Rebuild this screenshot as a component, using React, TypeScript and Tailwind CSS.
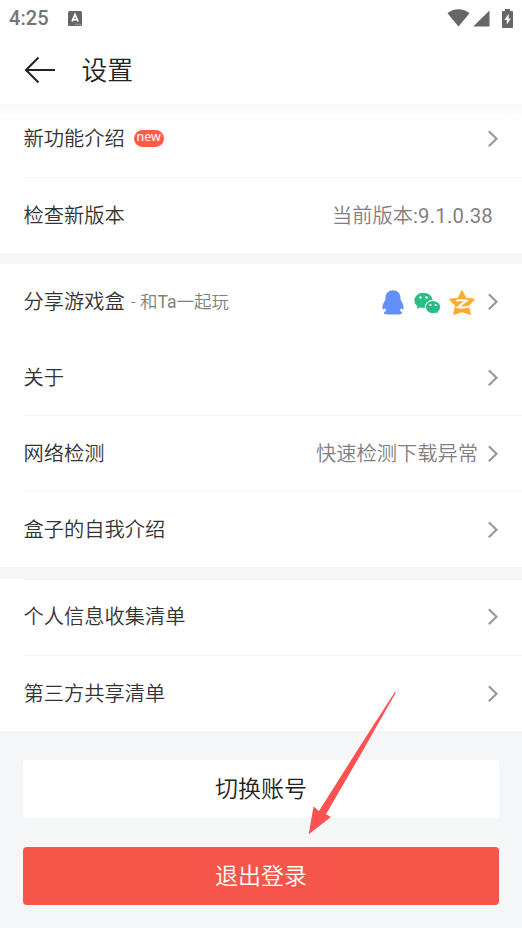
import type { ReactNode } from "react";

function StatusBar() {
  return (
    <div className="flex h-9 items-center justify-between pr-[9px] pl-[9px] text-[#666]">
      <div className="flex items-center">
        <span className="w-[59px] text-[20px] leading-9 font-medium tracking-[0.1px] text-[#757575]">4:25</span>
        <svg width="14" height="15" viewBox="0 0 14 15">
          <rect width="14" height="15" rx="1.5" fill="#666" />
          <path d="M4 10.5 7 3.5l3 7M5 8.6h4" fill="none" stroke="#fff" strokeWidth="1.7" />
          <path d="M7 13.3h6" stroke="#bbb" strokeWidth="1" strokeDasharray="1.2 .5" />
        </svg>
      </div>
      <div className="flex items-center">
        <svg width="23" height="18" viewBox="0 0 23 18" fill="currentColor">
          <path d="M.5 4.3C6.5-1 16.5-1 22.5 4.3L11.5 17.5z" />
        </svg>
        <svg className="ml-[3px]" width="17" height="17" viewBox="0 0 17 17" fill="currentColor">
          <path d="M16.5.5v16H.2z" />
        </svg>
        <svg className="ml-3" width="11" height="19" viewBox="0 0 11 19">
          <path d="M3 0h5v2h2.2q.8 0 .8.8v15.4q0 .8-.8.8H.8q-.8 0-.8-.8V2.8Q0 2 .8 2H3z" fill="currentColor" />
          <path d="M6.8 4.8 2.3 11h2.5v4.8l4-6.2H6.500z" fill="#fff" />
        </svg>
      </div>
    </div>
  );
}

function Chevron() {
  return (
    <svg className="ml-[9px]" width="12" height="18" viewBox="0 0 12 18" fill="none" stroke="#999" strokeWidth="2.2">
      <path d="m1.8 1.3 7.700 7.500-7.700 7.500" />
    </svg>
  );
}

function ShareIcons() {
  return (
    <div className="mr-0.5 flex items-center pt-0.5">
      <svg width="22" height="25" viewBox="0 0 22 25" fill="#6290fa">
        <path d="M11 .2C6.500.2 3.500 3.500 3.500 7.800v2C2 12 .5 14.500.4 17.300c0 2.200.9 2.900 2.500 1 .3.900.8 1.700 1.400 2.400-1.600.7-2.300 1.400-2.300 2.300 0 1.100 1 1.400 3.300 1.400h11.400c2.300 0 3.300-.3 3.300-1.400 0-.9-.7-1.600-2.300-2.300.6-.7 1.100-1.500 1.400-2.400 1.600 1.900 2.500 1.200 2.500-1-.1-2.800-1.600-5.300-3.100-7.500v-2C18.500 3.500 15.500.2 11 .2Z" />
      </svg>
      <svg className="mt-0.5 ml-2.5" width="28" height="24" viewBox="0 0 28 24">
        <path d="M9.500.8C4.500.8.4 4.200.4 8.500c0 2.300 1.200 4.300 3.200 5.800l-.8 2.800 3.200-1.600c1.100.3 2.200.5 3.500.5 5 0 9.100-3.400 9.100-7.500S14.500.8 9.500.8Z" fill="#29bf84" />
        <path d="M19 8.400c-4.300 0-7.800 3-7.800 6.700s3.500 6.700 7.800 6.700c1 0 2-.2 2.900-.5l2.800 1.500-.7-2.500c1.700-1.200 2.800-3.100 2.800-5.200 0-3.700-3.500-6.700-7.800-6.700Z" fill="#29bf84" stroke="#fff" strokeWidth="1.2" />
        <g fill="#fff">
          <circle cx="6.5" cy="5.500" r="1.300" />
          <circle cx="12.5" cy="5.500" r="1.300" />
          <circle cx="16.4" cy="13" r="1.100" />
          <circle cx="21.7" cy="13" r="1.100" />
        </g>
      </svg>
      <svg className="ml-1.5" width="28" height="27" viewBox="0 0 28 27">
        <path d="m14 1.500 3.900 7.700 8.600 1.100-6 6.600 1.900 8.600-8.400-2.800-8.400 2.800 1.900-8.600-6-6.600 8.600-1.100z" fill="#ffab2e" stroke="#ffab2e" strokeLinejoin="round" />
        <path d="M8.300 11.500q5.500-.6 10.200 0L10 18.200q5.500.9 11-.8" fill="none" stroke="#fff" strokeWidth="2.100" />
      </svg>
    </div>
  );
}

interface RowProps {
  label: string;
  extra?: ReactNode;
  children?: ReactNode;
  divider?: boolean;
  last?: boolean;
  arrow?: boolean;
}

function Row({ label, extra, children, divider, last, arrow = true }: RowProps) {
  return (
    <div className={last ? "h-[75px] pl-[23.5px]" : "h-[76px] pl-[23.5px]"}>
      <div className={arrow ? "flex h-[75px] items-center pr-[23px]" : "flex h-[75px] items-center pr-[29px]"}>
        <span className="pt-0.5 text-[20.25px] text-[#333]">{label}</span>
        {extra}
        <div className="ml-auto flex items-center text-[20.25px] text-[#808080]">
          {children}
          {arrow && <Chevron />}
        </div>
      </div>
      {divider && <div className="h-px bg-[#f3f3f3]" />}
    </div>
  );
}

export default function App() {
  return (
    <div className="relative h-[928px] w-[522px] overflow-hidden bg-[#f5f6f8] font-[Roboto,'Noto_Sans_CJK_SC',sans-serif] font-[350]">
      <header className="relative z-10 h-[104px] bg-white">
        <StatusBar />
        <div className="flex h-[68px] items-center pl-6">
          <svg width="32" height="28" viewBox="0 0 32 28" fill="none" stroke="#222" strokeWidth="2">
            <path d="M14.500 1.500 2 14l12.500 12.500M2 14h29" />
          </svg>
          <h1 className="ml-[25.5px] pt-0.5 text-[25.8px] font-[350] text-[#222]">设置</h1>
        </div>
        <div className="absolute inset-x-0 top-full h-3 bg-linear-to-b from-[#f7f7f7] to-white" />
      </header>

      <section className="-mt-[3px] bg-white">
        <Row
          label="新功能介绍"
          extra={
            <span className="ml-[9px] flex h-[17px] w-[30px] items-center justify-center rounded-full bg-[#ff5b45] pb-0.5 font-['Noto_Sans',sans-serif] text-[12.5px] font-normal text-white">
              new
            </span>
          }
        />
        <div className="ml-6 h-px bg-[#f3f3f3]" />
        <Row label="检查新版本" last arrow={false}>
          <span className="pt-0.5">
            当前版本<span className="font-normal tracking-[0.25px]">:9.1.0.38</span>
          </span>
        </Row>
      </section>

      <section className="mt-[11px] bg-white">
        <Row
          label="分享游戏盒"
          extra={
            <span className="ml-1.5 pt-0.5 text-[17.5px] text-[#808080]">
              - 和<span className="font-normal">Ta</span>一起玩
            </span>
          }
        >
          <ShareIcons />
        </Row>
        <Row label="关于" divider />
        <Row label="网络检测" divider>
          <span className="pt-0.5">快速检测下载异常</span>
        </Row>
        <Row label="盒子的自我介绍" last />
      </section>

      <section className="mt-3 bg-white">
        <div className="-mb-px ml-6 h-px bg-[#f0f0f0]" />
        <Row label="个人信息收集清单" />
        <div className="ml-6 h-px bg-[#f3f3f3]" />
        <Row label="第三方共享清单" last />
      </section>

      <div className="flex flex-col gap-[29px] px-[23px] pt-[29px]">
        <button className="h-[58px] rounded bg-white pt-[3px] text-[23px] text-[#222]">切换账号</button>
        <button className="flex h-[58px] items-center justify-center rounded bg-[#f65549] text-[23px] text-white">
          <span className="flex h-[42px] w-[124px] items-center justify-center border-2 border-[#fa5151] pt-[3px]">
            退出登录
          </span>
        </button>
      </div>

      {/* pointer to the logout button */}
      <svg className="absolute top-[685px] left-[300px]" width="105" height="155" viewBox="0 0 105 155" fill="#fc5252">
        <path d="M95 6.700 96 7.200 61.500 68 26 129.300 31 132 8.700 149.300 13.500 121.500 19 126 57.500 65z" />
      </svg>
    </div>
  );
}
